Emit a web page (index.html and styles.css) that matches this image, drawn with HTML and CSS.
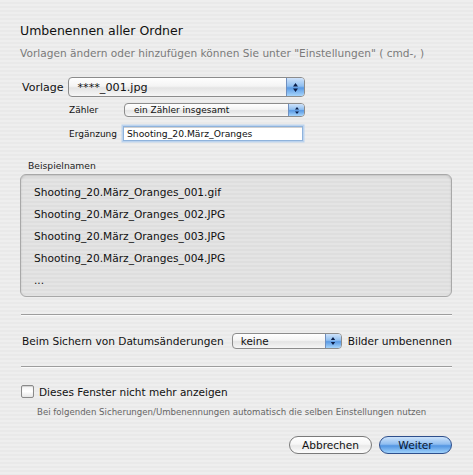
FILE: index.html
```html
<!DOCTYPE html>
<html lang="de">
<head>
<meta charset="utf-8">
<link rel="stylesheet" href="styles.css">
</head>
<body>
<div class="dialog">
  <div class="title">Umbenennen aller Ordner</div>
  <div class="subtitle">Vorlagen ändern oder hinzufügen können Sie unter "Einstellungen" ( cmd-, )</div>

  <div class="row-vorlage">
    <span class="label">Vorlage</span>
    <div class="popup big"><span class="popup-text">****_001.jpg</span><span class="cap"><svg width="7" height="11" viewBox="0 0 7 11"><path d="M3.5 1 L6 4.5 H1 Z M3.5 10 L6 6.5 H1 Z" fill="#0b1f4a"/></svg></span></div>
  </div>

  <div class="subgrid">
    <span class="small-label">Zähler</span>
    <div class="popup small"><span class="popup-text">ein Zähler insgesamt</span><span class="cap"><svg width="6" height="9" viewBox="0 0 6 9"><path d="M3 1 L5 3.6 H1 Z M3 8 L5 5.4 H1 Z" fill="#0b1f4a"/></svg></span></div>
    <span class="small-label">Ergänzung</span>
    <div class="field">Shooting_20.März_Oranges</div>
  </div>

  <div class="group-label">Beispielnamen</div>
  <div class="examples">
    <div class="ex">Shooting_20.März_Oranges_001.gif</div>
    <div class="ex">Shooting_20.März_Oranges_002.JPG</div>
    <div class="ex">Shooting_20.März_Oranges_003.JPG</div>
    <div class="ex">Shooting_20.März_Oranges_004.JPG</div>
    <div class="ex">...</div>
  </div>

  <div class="sep sep1"></div>

  <div class="row-date">
    <span>Beim Sichern von Datumsänderungen</span>
    <div class="popup mid"><span class="popup-text">keine</span><span class="cap"><svg width="6" height="10" viewBox="0 0 6 10"><path d="M3 1 L5.2 4 H0.8 Z M3 9 L5.2 6 H0.8 Z" fill="#0b1f4a"/></svg></span></div>
    <span>Bilder umbenennen</span>
  </div>

  <div class="sep sep2"></div>

  <div class="check-row">
    <span class="checkbox"></span>
    <span>Dieses Fenster nicht mehr anzeigen</span>
  </div>
  <div class="hint">Bei folgenden Sicherungen/Umbenennungen automatisch die selben Einstellungen nutzen</div>

  <div class="buttons">
    <div class="btn cancel">Abbrechen</div>
    <div class="btn default">Weiter</div>
  </div>
</div>
</body>
</html>
```

FILE: styles.css
```css
html, body {
  margin: 0;
  padding: 0;
}
body {
  width: 473px;
  height: 475px;
  overflow: hidden;
  font-family: "DejaVu Sans", "Liberation Sans", sans-serif;
  color: #111;
  background: repeating-linear-gradient(to bottom, #eeeeee 0px, #eeeeee 2px, #e9e9e9 2px, #e9e9e9 4px);
}
.dialog {
  padding: 22px 21px 0 20px;
  display: flex;
  flex-direction: column;
}
.title {
  font-size: 12.5px;
  line-height: 17px;
  color: #111;
}
.subtitle {
  margin-top: 7px;
  font-size: 10.6px;
  line-height: 14px;
  color: #7a7a7a;
}
.row-vorlage {
  margin-top: 17px;
  display: flex;
  align-items: center;
  gap: 5px;
  padding-left: 2px;
}
.label {
  font-size: 11px;
}
.popup {
  position: relative;
  display: flex;
  align-items: center;
  border: 1px solid #8c8c8c;
  border-radius: 4px;
  background: linear-gradient(to bottom, #ffffff 0%, #f4f4f4 45%, #e4e4e4 55%, #f6f6f6 100%);
  box-sizing: border-box;
  overflow: hidden;
}
.popup-text {
  flex: 1;
  white-space: nowrap;
}
.cap {
  align-self: stretch;
  display: flex;
  align-items: center;
  justify-content: center;
  border-left: 1px solid #6f8fbf;
  background: linear-gradient(to bottom, #cfe3fb 0%, #90bff0 45%, #5a9ae4 55%, #a6d4fb 100%);
}
.popup.big {
  width: 237px;
  height: 20px;
  font-size: 11.2px;
}
.popup.big .popup-text { padding-left: 8px; }
.popup.big .cap { width: 17px; }
.popup.small {
  width: 181px;
  height: 14px;
  font-size: 9px;
}
.popup.small .popup-text { padding-left: 9px; }
.popup.small .cap { width: 15px; }
.popup.mid {
  width: 114px;
  height: 16px;
  font-size: 10.4px;
  margin: 0 6px 0 8px;
}
.popup.mid .popup-text { padding-left: 8px; }
.popup.mid .cap { width: 15px; }

.subgrid {
  margin-top: 6px;
  margin-left: 49px;
  display: grid;
  grid-template-columns: 55px 181px;
  row-gap: 9px;
  align-items: center;
}
.small-label {
  font-size: 9px;
  color: #111;
}
.field {
  width: 180px;
  height: 15px;
  box-sizing: border-box;
  margin-left: -1px;
  border: 1px solid #8fb3dc;
  box-shadow: 0 0 0 1.5px #bcd3ee, inset 0 1px 0 #d0d0d0;
  background: #fff;
  font-size: 9.2px;
  line-height: 13px;
  padding-left: 3px;
  white-space: nowrap;
}
.group-label {
  margin-top: 19px;
  margin-left: 8px;
  font-size: 9.2px;
  line-height: 12px;
  color: #222;
}
.examples {
  margin-top: 2px;
  height: 123px;
  box-sizing: border-box;
  border: 1px solid #a8a8a8;
  border-radius: 6px;
  background: repeating-linear-gradient(to bottom, #e4e4e4 0px, #e4e4e4 2px, #dedede 2px, #dedede 4px);
  box-shadow: inset 0 1px 2px rgba(0,0,0,0.15);
  padding: 6px 0 0 13px;
}
.ex {
  font-size: 10.6px;
  line-height: 22px;
  height: 22px;
  white-space: nowrap;
}
.sep {
  height: 0;
  border-top: 1px solid #9d9d9d;
  border-bottom: 1px solid #fafafa;
  margin-left: 1px;
}
.sep1 { margin-top: 17px; }
.row-date {
  margin-top: 17px;
  display: flex;
  align-items: center;
  font-size: 10.6px;
  padding-left: 2px;
  white-space: nowrap;
}
.sep2 { margin-top: 17px; }
.check-row {
  margin-top: 17px;
  display: flex;
  align-items: center;
  gap: 5px;
  font-size: 10.5px;
  margin-left: 1px;
}
.checkbox {
  width: 11px;
  height: 11px;
  border: 1px solid #8a8a8a;
  border-radius: 2px;
  background: linear-gradient(to bottom, #f4f4f4 0%, #ffffff 50%, #e6e6e6 100%);
  box-shadow: inset 0 1px 1px rgba(0,0,0,0.15);
}
.hint {
  margin-top: 8px;
  margin-left: 17px;
  font-size: 8.6px;
  line-height: 12px;
  color: #666;
  white-space: nowrap;
}
.buttons {
  margin-top: 18px;
  display: flex;
  justify-content: flex-end;
  gap: 7px;
}
.btn {
  height: 18px;
  box-sizing: border-box;
  border-radius: 9px;
  font-size: 10.6px;
  line-height: 16px;
  text-align: center;
}
.btn.cancel {
  width: 83px;
  border: 1px solid #7a7a7a;
  background: linear-gradient(to bottom, #ffffff 0%, #f6f6f6 45%, #e8e8e8 55%, #fdfdfd 100%);
  color: #111;
}
.btn.default {
  width: 73px;
  border: 1px solid #2e4f8c;
  background: linear-gradient(to bottom, #cde3fb 0%, #8fbdf0 45%, #5295e2 55%, #9fd2fb 100%);
  color: #0a1630;
}
```
